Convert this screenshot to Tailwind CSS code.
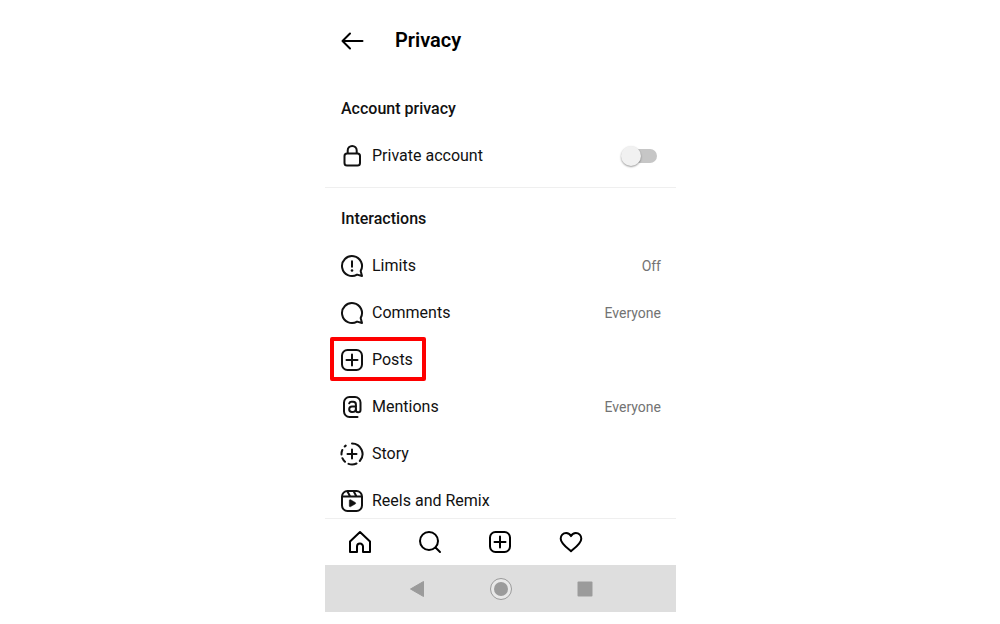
<!DOCTYPE html>
<html lang="en">
<head>
  <meta charset="UTF-8" />
  <meta name="viewport" content="width=device-width, initial-scale=1.0" />
  <title>Privacy</title>
  <script src="https://cdn.jsdelivr.net/npm/@tailwindcss/browser@4"></script>
</head>

<body class="bg-white pl-px text-[#111] font-['Roboto',sans-serif]">
  <div class="mx-auto flex h-screen w-full max-w-[351px] flex-col py-3">
    <!-- Title bar -->
    <header class="flex h-14 shrink-0 items-center gap-[30px] px-4 text-black">
      <button type="button" aria-label="Back">
        <svg class="size-6" viewBox="0 0 24 24" fill="none" stroke="currentColor" stroke-width="2" stroke-linecap="round" stroke-linejoin="round">
          <path d="M21.500 13H1.500M9 5.500L1.500 13l7.500 7.500" />
        </svg>
      </button>
      <h1 class="text-xl font-semibold">Privacy</h1>
    </header>

    <main class="min-h-0 flex-1 overflow-hidden">
      <!-- Account privacy -->
      <section class="border-b border-[#efefef] pt-[18px] pb-2">
        <h2 class="flex h-[46px] items-center px-4 text-base font-medium">Account privacy</h2>
        <label class="flex h-[47px] items-center gap-2 px-[15px]">
          <svg class="size-6" viewBox="0 0 24 24" fill="none" stroke="currentColor" stroke-width="2" stroke-linejoin="round">
            <rect x="4.500" y="9.500" width="15.500" height="12" rx="2.500" />
            <path d="M7.700 9.500V6.500a4.500 4.500 0 0 1 9 0v3" />
          </svg>
          <span class="flex-1">Private account</span>
          <input type="checkbox" class="relative mr-1 h-5 w-9 appearance-none before:absolute before:top-[3px] before:right-0 before:h-3.5 before:w-8 before:rounded-full before:bg-[#c6c6c6] after:absolute after:top-0 after:left-0 after:size-5 after:rounded-full after:bg-[#f1f1f1] after:shadow-[0_1px_2px_rgba(0,0,0,0.4)] checked:after:left-4" />
        </label>
      </section>

      <!-- Interactions -->
      <section class="pt-[7px]">
        <h2 class="flex h-[47px] items-center px-4 text-base font-medium">Interactions</h2>
        <ul>
          <li>
            <a href="#" class="flex h-[47px] items-center gap-2 px-[15px]">
              <svg class="size-6" viewBox="0 0 24 24" fill="none" stroke="currentColor" stroke-width="2" stroke-linejoin="round">
                <path d="M20.656 17.008a9.993 9.993 0 1 0-3.590 3.615L22 22Z" />
                <path d="M12 7.200v5.600" stroke-linecap="round" />
                <circle cx="12" cy="16.500" r="1.300" fill="currentColor" stroke="none" />
              </svg>
              <span class="flex-1">Limits</span>
              <span class="text-sm text-[#737373]">Off</span>
            </a>
          </li>
          <li>
            <a href="#" class="flex h-[47px] items-center gap-2 px-[15px]">
              <svg class="size-6" viewBox="0 0 24 24" fill="none" stroke="currentColor" stroke-width="2" stroke-linejoin="round">
                <path d="M20.656 17.008a9.993 9.993 0 1 0-3.590 3.615L22 22Z" />
              </svg>
              <span class="flex-1">Comments</span>
              <span class="text-sm text-[#737373]">Everyone</span>
            </a>
          </li>
          <li class="relative">
            <a href="#" class="flex h-[47px] items-center gap-2 px-[15px]">
              <svg class="size-6" viewBox="0 0 24 24" fill="none" stroke="currentColor" stroke-width="2" stroke-linecap="round">
                <rect x="2" y="2" width="20" height="20" rx="5.500" />
                <path d="M12 6.500v11M6.500 12h11" />
              </svg>
              <span class="flex-1">Posts</span>
            </a>
            <!-- highlight -->
            <div class="pointer-events-none absolute top-px left-[5px] h-11 w-24 rounded-xs border-4 border-[#fe0000]"></div>
          </li>
          <li>
            <a href="#" class="flex h-[47px] items-center gap-2 px-[15px]">
              <svg class="size-6" viewBox="0 0 24 24" fill="none" stroke="currentColor" stroke-width="2" stroke-linecap="round" stroke-linejoin="round">
                <path d="M17.500 22H9.500A5.500 5.500 0 0 1 4 16.500V7.500A5.500 5.500 0 0 1 9.500 2h5.500A5.500 5.500 0 0 1 20.500 7.500V15a2.300 2.300 0 0 1-4.600 0V9.500A2.700 2.700 0 0 0 13.200 6.800h-1.500a2.500 2.500 0 0 0-2.500 1.500" />
                <path d="M15.900 11.500h-3.900a2.800 2.800 0 0 0 0 5.600c2.100 0 3.900-1.100 3.900-3.100" />
              </svg>
              <span class="flex-1">Mentions</span>
              <span class="text-sm text-[#737373]">Everyone</span>
            </a>
          </li>
          <li>
            <a href="#" class="flex h-[47px] items-center gap-2 px-[15px]">
              <svg class="size-6" viewBox="0 0 24 24" fill="none" stroke="currentColor" stroke-width="2" stroke-linecap="round">
                <path d="M12 7.500v9M7.500 12h9" />
                <path d="M12 1.500a10.500 10.500 0 0 1 7.800 17.500" />
                <path d="M16.500 21.500a10.500 10.500 0 0 1-8 .4M5 19.800a10.500 10.500 0 0 1-2.600-3.600M1.500 12.500a10.500 10.500 0 0 1 .8-4.500M4.700 4.500a10.500 10.500 0 0 1 1-.9" />
              </svg>
              <span class="flex-1">Story</span>
            </a>
          </li>
          <li>
            <a href="#" class="flex h-[47px] items-center gap-2 px-[15px]">
              <svg class="size-6" viewBox="0 0 24 24" fill="none" stroke="currentColor" stroke-width="2" stroke-linejoin="round">
                <rect x="2" y="2" width="20" height="20" rx="5.500" />
                <path d="M2 7.500h20M7.200 2.100l3 5.400M13.500 2l3 5.500" />
                <path d="M9.800 17.700a.9.900 0 0 1-.5-.8v-5.300a.9.900 0 0 1 1.400-.8l4.500 2.600a.9.900 0 0 1 0 1.600l-4.500 2.600a.9.900 0 0 1-.9.100Z" fill="currentColor" stroke-width="0.500" />
              </svg>
              <span class="flex-1">Reels and Remix</span>
            </a>
          </li>
        </ul>
      </section>
    </main>

    <!-- Tab bar -->
    <nav class="grid h-[47px] shrink-0 grid-cols-5 items-center justify-items-center border-t border-[#efefef] text-black">
      <a href="#" aria-label="Home">
        <svg class="size-6" viewBox="0 0 24 24" fill="none" stroke="currentColor" stroke-width="2" stroke-linejoin="round">
          <path d="M9.005 16.545a2.997 2.997 0 0 1 2.997-2.997A2.997 2.997 0 0 1 15 16.545V22h7V11.543L12 2 2 11.543V22h7.005Z" />
        </svg>
      </a>
      <a href="#" aria-label="Search">
        <svg class="size-6" viewBox="0 0 24 24" fill="none" stroke="currentColor" stroke-width="2" stroke-linecap="round">
          <circle cx="11" cy="11" r="9" />
          <path d="M17.500 17.500L22 22" />
        </svg>
      </a>
      <a href="#" aria-label="New post">
        <svg class="size-6" viewBox="0 0 24 24" fill="none" stroke="currentColor" stroke-width="2" stroke-linecap="round">
          <rect x="2" y="2" width="20" height="20" rx="5.500" />
          <path d="M12 6.500v11M6.500 12h11" />
        </svg>
      </a>
      <a href="#" aria-label="Activity">
        <svg class="size-6" viewBox="0 0 24 24" fill="none" stroke="currentColor" stroke-width="2" stroke-linejoin="round">
          <path d="M12 21.200C9 18.500 1.700 13.500 1.700 8.700a5.600 5.600 0 0 1 5.500-5.800c2.200 0 3.800 1.200 4.800 3.200 1-2 2.600-3.200 4.800-3.200a5.600 5.600 0 0 1 5.500 5.800c0 4.800-7.300 9.800-10.300 12.500Z" />
        </svg>
      </a>
    </nav>

    <!-- System buttons -->
    <footer class="flex h-[47px] shrink-0 items-center justify-center gap-15 bg-[#dedede] text-[#9b9b9b]">
      <button type="button" aria-label="System back">
        <svg class="size-6" viewBox="0 0 24 24" fill="currentColor" stroke="currentColor" stroke-width="1" stroke-linejoin="round">
          <path d="M18.500 4.500v15L5.500 12Z" />
        </svg>
      </button>
      <button type="button" aria-label="System home">
        <svg class="size-6" viewBox="0 0 24 24">
          <circle cx="12" cy="12" r="10.500" fill="#e8e8e8" stroke="currentColor" />
          <circle cx="12" cy="12" r="7" fill="currentColor" />
        </svg>
      </button>
      <button type="button" aria-label="Recent apps">
        <svg class="size-6" viewBox="0 0 24 24" fill="currentColor">
          <rect x="4.500" y="4.500" width="15" height="15" rx="1" />
        </svg>
      </button>
    </footer>
  </div>
</body>
</html>
